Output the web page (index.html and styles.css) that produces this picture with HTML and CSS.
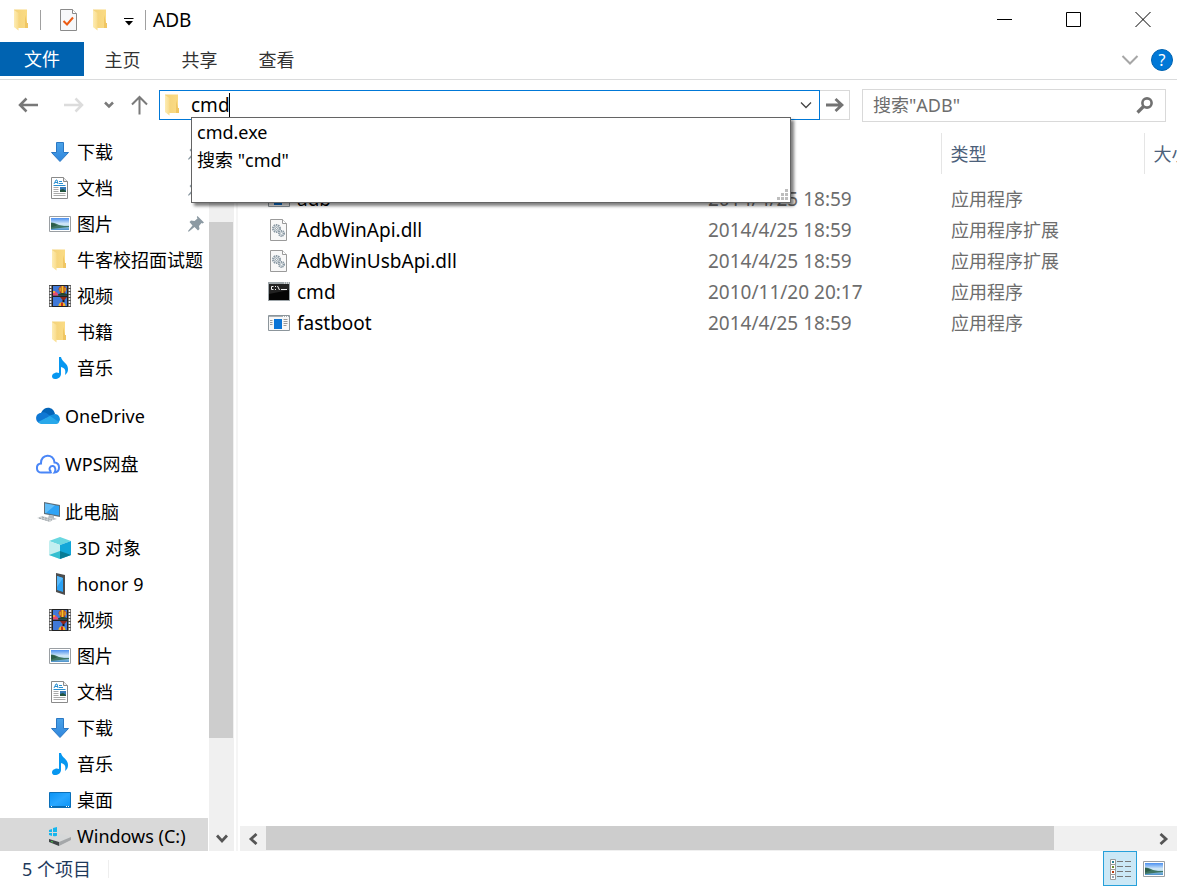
FILE: index.html
```html
<!DOCTYPE html>
<html lang="zh-CN">
<head>
<meta charset="utf-8">
<meta name="viewport" content="width=device-width, initial-scale=1">
<title>ADB</title>
<link rel="stylesheet" href="styles.css">
</head>
<body>
<svg class="sprite" aria-hidden="true">
  <defs>
    <linearGradient id="gFolder" x1="0" x2="1"><stop offset="0" stop-color="#f3d27a"/><stop offset="1" stop-color="#fbdc85"/></linearGradient>
    <linearGradient id="gFlap" x1="0" x2="1"><stop offset="0" stop-color="#fdecb4"/><stop offset="1" stop-color="#f9dc8b"/></linearGradient>
    <linearGradient id="gSky" x1="0" y1="0" x2="0" y2="1"><stop offset="0" stop-color="#4a8ff0"/><stop offset="0.5" stop-color="#d8ecf7"/><stop offset="0.75" stop-color="#8cc0dc"/><stop offset="1" stop-color="#4a90cc"/></linearGradient>
    <linearGradient id="gDesk" x1="0" y1="0" x2="1" y2="1"><stop offset="0" stop-color="#0a93f5"/><stop offset="0.5" stop-color="#2aa7ff"/><stop offset="1" stop-color="#0a93f5"/></linearGradient>
    <linearGradient id="gArrow" x1="0" y1="0" x2="0" y2="1"><stop offset="0" stop-color="#4ba3e8"/><stop offset="1" stop-color="#2f86dd"/></linearGradient>
  </defs>
  <symbol id="folder" viewBox="0 0 22 22">
    <path d="M3 0.500H16V14H17V19H8L3 18Z" fill="url(#gFolder)"/>
    <path d="M16 14h1v5h-3V6z" fill="#f0c663"/>
    <path d="M3 1L7.500 4V21.500L3 18Z" fill="url(#gFlap)"/>
  </symbol>
  <symbol id="download" viewBox="0 0 22 22">
    <path d="M7.500 1.500h7v10h5L11 20.500 2.500 11.500h5z" fill="url(#gArrow)" stroke="#2b78c4"/>
  </symbol>
  <symbol id="document" viewBox="0 0 22 22">
    <path d="M2.500 0.500h12l4 4v17h-16z" fill="#fff" stroke="#8a8a8a"/>
    <path d="M14.500 0.500v4h4" fill="#eee" stroke="#8a8a8a"/>
    <path d="M5 7l2-4h1l1 4M6 5.500h3M10 4.500h3M10 6.500h4M4.500 8.500h12" stroke="#2a8fd0" fill="none"/>
    <path d="M4.500 10.500h5M4.500 12.500h5M4.500 14.500h5M4.500 16.500h12M4.500 18.500h12" stroke="#aaa"/>
    <path d="M11 10h6v5h-6z" fill="#3678b5"/><path d="M11 15v-2l3-1 3 2v1z" fill="#24553e"/>
  </symbol>
  <symbol id="picture" viewBox="0 0 22 22">
    <path d="M0.500 3.500h21v15h-21z" fill="#fff" stroke="#9a9fa3"/>
    <path d="M2 5h18v12H2z" fill="url(#gSky)"/>
    <path d="M2 9.500c3 0 5 1 8 2.500 3 1 7 1 10 1v1c-7 1-12 1-18 2z" fill="#3f7663"/>
    <path d="M2 10c3 0 4 1 6 2.500L2 14.500z" fill="#2d5d49"/>
  </symbol>
  <symbol id="video" viewBox="0 0 22 22">
    <path d="M0 0h22v22H0z" fill="#555"/>
    <path d="M3 0h16v22H3z" fill="#222"/>
    <path d="M4 1h14v9.500H4zM4 12h14v9H4z" fill="#4079d8"/>
    <path d="M1.500 1v21M20.500 1v21" stroke="#f3f3f3" stroke-width="1.600" stroke-dasharray="2 1"/>
    <path d="M4 7c2-2 4 0 6 3.500H4z" fill="#e64b70"/><path d="M4 6h2v2H4z" fill="#f2a43a"/>
    <path d="M9.500 4.500a4 3.500 0 018 0L15 9h-3z" fill="#a8321f"/><path d="M12.500 1h2v7h-2z" fill="#f4c525"/><path d="M10.500 2.500h1.200v4h-1.200zM15.500 2.500h1.200v4h-1.200z" fill="#e8c22b"/>
    <path d="M9 9.500c3-2 6-2 9-.5v1.500H9z" fill="#23452b"/>
    <path d="M11 12h7l-2.500 3h-2z" fill="#8f2519"/><path d="M13.500 15h2v2h-2z" fill="#181818"/>
    <path d="M9.500 21c0-5 7-5 7 0z" fill="#f4b425"/><path d="M12 17.500h2V21h-2z" fill="#c42b20"/>
  </symbol>
  <symbol id="music" viewBox="0 0 22 22">
    <path d="M10 0h2c1 5 7 6 7 12 0 3-1 4-3 6 1-5 0-7-4-8v7c0 3-3 5-6 5-4 0-4-5 0-6 2-1 3 0 4 0z" fill="#0797f0"/>
  </symbol>
  <symbol id="onedrive" viewBox="0 0 24 24">
    <path d="M5 9c3-7 12-7 14 1l-6 5z" fill="#0364b8"/>
    <path d="M5 9c3-2 6 0 9 3L3 19C-2 16 0 9 5 9z" fill="#0f78d4"/>
    <path d="M12 12l7-2c5 0 7 8 2 9l-6-2z" fill="#1490df"/>
    <path d="M2 18l12-6 9 6c-1 2-2 2-4 2H5c-1 0-2-1-3-2z" fill="#28a8ea"/>
  </symbol>
  <symbol id="wps" viewBox="0 0 24 24">
    <path d="M15 20.500H5.500C-.5 20.500-.5 12 5 11.500 4.500 1.500 18 1 18.500 10.500c6 .5 6 9.500 0 10 1.500-2 1-6-1.500-6.500-3-.5-4.500 3-2.500 5" fill="none" stroke="#4a86f7" stroke-width="2" stroke-linecap="round"/>
  </symbol>
  <symbol id="pc" viewBox="0 0 24 24">
    <path d="M8 2l16 3v12L8 14z" fill="#5d6f7a"/><path d="M9 3.500L23 6v9.500L9 13z" fill="#2ea3f5"/><path d="M9 3.500L19 5.200 10 13 9 12.800z" fill="#62bdf8"/>
    <path d="M13 15l5 1v2l3 1-4 1-5-2z" fill="#b4bbbf"/><path d="M6 16l12 3-4 3L1 18z" fill="#d0d4d6"/><path d="M3 18l10 3M6 17l10 3" stroke="#979fa4" stroke-dasharray="2 1"/>
  </symbol>
  <symbol id="cube" viewBox="0 0 22 22">
    <path d="M11 0l11 4-11 4L0 4z" fill="#69d7e0"/><path d="M0 4l11 4v14L0 18z" fill="#c3eff0"/><path d="M22 4L11 8v14l11-4z" fill="#12a7d8"/>
    <path d="M0 18l11-4v8z" fill="#35bfd0"/><path d="M11 14l11 4-11 4z" fill="#087c96"/>
  </symbol>
  <symbol id="phone" viewBox="0 0 22 22">
    <path d="M7 0l9 2v20l-9-3z" fill="#4d4d4d"/><path d="M8 3l6 2v14l-6-2z" fill="#2aa2f5"/><path d="M8 3l6 2-6 9z" fill="#56b9fb"/>
  </symbol>
  <symbol id="desktop" viewBox="0 0 22 22">
    <path d="M0.500 3.500h21v15h-21z" fill="url(#gDesk)" stroke="#0b6fb8"/><path d="M1 17.500h20" stroke="#086bb0"/><path d="M2 17.500h1M17 17.500h1M19 17.500h1" stroke="#fff"/>
  </symbol>
  <symbol id="drive" viewBox="0 0 22 22">
    <path d="M0 5l3-1v3H0zM4 3l4-1v5H4zM0 8h3v3l-3-1zM4 8h4v4l-4-1z" fill="#16b6ee"/>
    <path d="M0 14l12-5 10 3-12 5z" fill="#d6d8d9"/><path d="M0 14l10 3v4L0 17z" fill="#3f4446"/><path d="M10 17l12-5v3l-12 6z" fill="#a4a7a9"/><path d="M2 16.500l2 .5" stroke="#49cf49"/>
  </symbol>
  <symbol id="pin" viewBox="0 0 16 16">
    <path d="M9.500 0L16 6.500l-1.500 1-1-.5-2.500 3 .5 3-1.500 1.500-3.500-3.500L1 15.500H0V15l4.500-5.500L1.500 6 3 4.500l3.500.5L9.500 2.500 8.800 1z" fill="#8c9aa3"/>
  </symbol>
  <symbol id="app" viewBox="0 0 22 22">
    <path d="M0.500 3.500h21v15h-21z" fill="#f7f7f7" stroke="#8c959b"/><path d="M1 4.500h20" stroke="#a8afb3"/><path d="M15 4.500h1M17 4.500h1M19 4.500h1" stroke="#fff"/>
    <path d="M6 7h8v10H6z" fill="#0a74d6"/><path d="M2 8.500h2.500M2 10.500h2.500M2 12.500h2.500M15.500 7.500h4M15.500 9.500h4M15.500 11.500h4M15.500 13.500h3" stroke="#9a9a9a"/>
  </symbol>
  <symbol id="dll" viewBox="0 0 22 22">
    <path d="M2.500 0.500h12l4 4v17h-16z" fill="#f8f8f8" stroke="#9a9a9a"/><path d="M14.500 0.500v4h4" fill="#fff" stroke="#9a9a9a"/>
    <g fill="none"><circle cx="8.500" cy="9.500" r="3.500" stroke="#8998a3" stroke-width="2" stroke-dasharray="1.500 .7"/><circle cx="8.500" cy="9.500" r="2.500" stroke="#aebac2"/><circle cx="8.500" cy="9.500" r="1" stroke="#8998a3"/>
    <circle cx="13.500" cy="14.500" r="2.500" stroke="#8998a3" stroke-width="2" stroke-dasharray="1.200 .6"/><circle cx="13.500" cy="14.500" r="1" stroke="#b9c4ca"/></g>
  </symbol>
  <symbol id="console" viewBox="0 0 22 22">
    <path d="M0 1h22v19H0z" fill="#9da5a9"/><path d="M1 3h20v16H1z" fill="#050505"/><path d="M1 3h20v6L1 13z" fill="#222"/>
    <path d="M5.500 5.500h-2v3h2M7.500 5v1M7.500 8v1M9.500 5l2 4M13 8.500h6" stroke="#eee" fill="none"/><path d="M16 2h1M18 2h1M20 2h1" stroke="#fff"/>
  </symbol>
</svg>

<div class="window">
  <header class="titlebar">
    <svg class="icon" aria-hidden="true"><use href="#folder"/></svg>
    <span class="rule rule-first"></span>
    <button class="quick" aria-label="属性">
      <svg class="icon" viewBox="0 0 22 22"><path d="M3.500 0.500h12l4 4v17h-16z" fill="#f7f8fa" stroke="#8a8a8a"/><path d="M15.500 0.500v4h4" fill="#fff" stroke="#8a8a8a"/><path d="M6.500 12l3.500 3.500 6-7" fill="none" stroke="#ec5b13" stroke-width="2"/></svg>
    </button>
    <button class="quick" aria-label="新建文件夹"><svg class="icon"><use href="#folder"/></svg></button>
    <button class="quick quick-more" aria-label="自定义快速访问工具栏"><svg width="10" height="10" viewBox="0 0 10 10"><path d="M0 1.500h9.500" stroke="#000"/><path d="M1 4h8L5 8.500z"/></svg></button>
    <span class="rule"></span>
    <h1 class="title">ADB</h1>
    <div class="controls">
      <button aria-label="最小化"><svg width="16" height="16"><path d="M0 7.500h15" stroke="#000"/></svg></button>
      <button aria-label="最大化"><svg width="16" height="16"><path d="M0.500 0.500h14v14h-14z" fill="none" stroke="#000"/></svg></button>
      <button aria-label="关闭"><svg width="16" height="16"><path d="M0.500 0l15 15M15.500 0l-15 15" stroke="#000"/></svg></button>
    </div>
  </header>

  <nav class="ribbon" aria-label="功能区">
    <button class="tab tab-file">文件</button>
    <button class="tab">主页</button>
    <button class="tab">共享</button>
    <button class="tab">查看</button>
    <div class="ribbon-end">
      <button aria-label="展开功能区"><svg width="18" height="12"><path d="M1.500 2l7.500 7.500L16.500 2" fill="none" stroke="#a6a6a6" stroke-width="2"/></svg></button>
      <button class="help" aria-label="帮助">?</button>
    </div>
  </nav>

  <div class="navbar">
    <button class="nav-wide" aria-label="后退"><svg width="20" height="16"><path d="M1.500 8H20M8.500 1.500L2 8l6.500 6.500" fill="none" stroke="#787878" stroke-width="2.500"/></svg></button>
    <button class="nav-wide" aria-label="前进"><svg width="20" height="16"><path d="M0 8h18.500M11.500 1.500L18 8l-6.500 6.500" fill="none" stroke="#dcdcdc" stroke-width="2.500"/></svg></button>
    <button class="nav-small" aria-label="最近位置"><svg width="10" height="8"><path d="M1 1.500l4 4 4-4" fill="none" stroke="#7a7a7a" stroke-width="2.500"/></svg></button>
    <button class="nav-up" aria-label="上移"><svg width="18" height="20"><path d="M8.500 19.500V2M1 9.500L8.500 2 16 9.500" fill="none" stroke="#7a7a7a" stroke-width="2"/></svg></button>
    <div class="address">
      <svg class="icon" aria-hidden="true"><use href="#folder"/></svg>
      <input class="path" type="text" value="cmd" aria-label="地址">
      <span class="caret"></span>
      <button class="drop" aria-label="以前的位置"><svg width="12" height="8"><path d="M1 1.500l5 5 5-5" fill="none" stroke="#444" stroke-width="1.300"/></svg></button>
      <ul class="suggest">
        <li>cmd.exe</li>
        <li>搜索 "cmd"</li>
        <li class="grip" aria-hidden="true"><svg width="12" height="12" fill="#bdbdbd"><path d="M8 0h3v3H8zM4 4h3v3H4zM8 4h3v3H8zM0 8h3v3H0zM4 8h3v3H4zM8 8h3v3H8z"/></svg></li>
      </ul>
    </div>
    <button class="go" aria-label="转到"><svg width="18" height="16"><path d="M0 8h16M9.500 2l6.500 6-6.500 6" fill="none" stroke="#737373" stroke-width="2.800"/></svg></button>
    <div class="search">
      <input type="search" placeholder='搜索"ADB"' aria-label="搜索">
      <svg width="18" height="18" aria-hidden="true"><circle cx="11" cy="7" r="4.600" fill="none" stroke="#707070" stroke-width="2.600"/><path d="M7.500 10.500L1.500 16.500" stroke="#707070" stroke-width="3.200"/></svg>
    </div>
  </div>

  <div class="body">
    <aside class="sidebar">
      <ul class="tree">
        <li class="node"><svg class="icon"><use href="#download"/></svg>下载<svg class="pin"><use href="#pin"/></svg></li>
        <li class="node"><svg class="icon"><use href="#document"/></svg>文档<svg class="pin"><use href="#pin"/></svg></li>
        <li class="node"><svg class="icon"><use href="#picture"/></svg>图片<svg class="pin"><use href="#pin"/></svg></li>
        <li class="node"><svg class="icon"><use href="#folder"/></svg>牛客校招面试题</li>
        <li class="node"><svg class="icon"><use href="#video"/></svg>视频</li>
        <li class="node"><svg class="icon"><use href="#folder"/></svg>书籍</li>
        <li class="node"><svg class="icon"><use href="#music"/></svg>音乐</li>
        <li class="node root"><svg class="icon-root"><use href="#onedrive"/></svg>OneDrive</li>
        <li class="node root"><svg class="icon-root"><use href="#wps"/></svg>WPS网盘</li>
        <li class="node root"><svg class="icon-root"><use href="#pc"/></svg>此电脑</li>
        <li class="node"><svg class="icon"><use href="#cube"/></svg>3D 对象</li>
        <li class="node"><svg class="icon"><use href="#phone"/></svg>honor 9</li>
        <li class="node"><svg class="icon"><use href="#video"/></svg>视频</li>
        <li class="node"><svg class="icon"><use href="#picture"/></svg>图片</li>
        <li class="node"><svg class="icon"><use href="#document"/></svg>文档</li>
        <li class="node"><svg class="icon"><use href="#download"/></svg>下载</li>
        <li class="node"><svg class="icon"><use href="#music"/></svg>音乐</li>
        <li class="node"><svg class="icon"><use href="#desktop"/></svg>桌面</li>
        <li class="node selected"><svg class="icon"><use href="#drive"/></svg>Windows (C:)</li>
      </ul>
      <div class="vscroll">
        <span class="vthumb"></span>
        <button aria-label="向下滚动"><svg width="12" height="10"><path d="M1 1.500l5 5.500 5-5.500" fill="none" stroke="#555" stroke-width="2.800"/></svg></button>
      </div>
    </aside>

    <main class="content">
      <div class="list">
        <table class="files">
          <colgroup><col class="c-name"><col class="c-date"><col class="c-type"><col class="c-size"></colgroup>
          <thead><tr><th aria-label="名称"></th><th aria-label="修改日期"></th><th>类型</th><th>大小</th></tr></thead>
          <tbody>
            <tr><td class="name"><svg class="icon"><use href="#app"/></svg>adb</td><td class="latin">2014/4/25 18:59</td><td>应用程序</td><td></td></tr>
            <tr><td class="name"><svg class="icon"><use href="#dll"/></svg>AdbWinApi.dll</td><td class="latin">2014/4/25 18:59</td><td>应用程序扩展</td><td></td></tr>
            <tr><td class="name"><svg class="icon"><use href="#dll"/></svg>AdbWinUsbApi.dll</td><td class="latin">2014/4/25 18:59</td><td>应用程序扩展</td><td></td></tr>
            <tr><td class="name"><svg class="icon"><use href="#console"/></svg>cmd</td><td class="latin">2010/11/20 20:17</td><td>应用程序</td><td></td></tr>
            <tr><td class="name"><svg class="icon"><use href="#app"/></svg>fastboot</td><td class="latin">2014/4/25 18:59</td><td>应用程序</td><td></td></tr>
          </tbody>
        </table>
      </div>
      <div class="hscroll">
        <button aria-label="向左滚动"><svg width="10" height="12"><path d="M8.500 1L3 6l5.500 5" fill="none" stroke="#555" stroke-width="2.800"/></svg></button>
        <div class="htrack"><span class="hthumb"></span></div>
        <button aria-label="向右滚动"><svg width="10" height="12"><path d="M1.500 1L7 6l-5.500 5" fill="none" stroke="#555" stroke-width="2.800"/></svg></button>
      </div>
    </main>
  </div>

  <footer class="status">
    <span class="count">5 个项目</span>
    <div class="views">
      <button class="view active" aria-label="详细信息"><svg width="22" height="22"><g fill="#fff" stroke="#9a9a9a"><path d="M1.500 1.500h5v5h-5zM1.500 6.500h5v5h-5zM1.500 11.500h5v5h-5zM1.500 16.500h5v5h-5z"/></g><path d="M3 3h2v2H3z" fill="#2a7f93"/><path d="M3 8h2v2H3z" fill="#6c8b2c"/><path d="M3 13h2v2H3z" fill="#b83a10"/><path d="M3 18h2v2H3z" fill="#8fa3b5"/><path d="M8 3.500h6M16 3.500h6M8 8.500h6M16 8.500h6M8 13.500h6M16 13.500h6M8 18.500h6M16 18.500h6" stroke="#777"/></svg></button>
      <button class="view" aria-label="大缩略图"><svg class="icon"><use href="#picture"/></svg></button>
    </div>
  </footer>
</div>
</body>
</html>
```

FILE: styles.css
```css
* { box-sizing: border-box; }

body {
  margin: 0;
  background: #fff;
  color: #000;
  font: 18px/24px "Noto Sans", "Noto Sans CJK SC", sans-serif;
}

button, input { font: inherit; color: inherit; }

button {
  display: flex;
  align-items: center;
  justify-content: center;
  padding: 0;
  border: 0;
  background: none;
}

ul { list-style: none; margin: 0; padding: 0; }
svg { flex: none; }

.sprite { position: absolute; width: 0; height: 0; }
.icon { width: 22px; height: 22px; }
.icon-root { width: 24px; height: 24px; }
.latin { font-size: 19px; }

.window {
  display: flex;
  flex-direction: column;
  height: 100vh;
  overflow: hidden;
}

/* Title bar */
.titlebar {
  display: flex;
  align-items: center;
  height: 42px;
  padding: 0 0 3px 11px;
}
.rule { width: 1px; height: 20px; background: #a0a0a0; }
.rule-first { margin: 0 16px 0 7px; }
.quick { width: 32px; height: 32px; }
.quick:first-of-type { width: 22px; }
.quick + .quick { margin-left: 6px; }
.quick-more { width: 24px; padding-top: 5px; margin-right: 4px; }
.quick + .quick-more { margin-left: 0; }
.title { margin: 0 0 0 7px; font-size: 19px; font-weight: 400; }
.controls { display: flex; margin-left: auto; }
.controls button { width: 69px; height: 39px; }

/* Ribbon tabs */
.ribbon {
  display: flex;
  height: 38px;
  border-bottom: 1px solid #dadbdc;
  color: #333;
}
.tab { width: 77px; height: 36px; }
.tab-file { width: 84px; height: 34px; background: #0063b1; color: #fff; }
.ribbon-end {
  display: flex;
  align-items: center;
  gap: 12px;
  height: 36px;
  margin-left: auto;
  padding-right: 4px;
}
.help {
  width: 22px;
  height: 22px;
  border: 1px solid #0063b1;
  border-radius: 50%;
  background: #0078d7;
  color: #fff;
  font-size: 16px;
}

/* Navigation bar */
.navbar {
  display: flex;
  align-items: center;
  height: 50px;
  padding: 0 11px 0 5px;
}
.nav-wide { width: 46px; height: 30px; }
.nav-small { width: 24px; height: 30px; }
.nav-up { width: 38px; height: 30px; }
.address {
  position: relative;
  display: flex;
  align-items: center;
  flex: 1;
  height: 30px;
  padding-left: 2px;
  border: 1px solid #0078d7;
}
.path {
  width: 38px;
  height: 26px;
  margin-left: 7px;
  padding: 0;
  border: 0;
  outline: 0;
  font-size: 19px;
}
.caret { width: 1px; height: 24px; background: #000; }
.drop { width: 26px; height: 28px; margin-left: auto; }
.suggest {
  position: absolute;
  z-index: 2;
  top: 26px;
  left: 31px;
  right: 28px;
  height: 86px;
  padding: 0 5px;
  border: 1px solid #646464;
  background: #fff;
  box-shadow: 3px 3px 3px rgba(0, 0, 0, 0.5);
  line-height: 28px;
}
.grip { position: absolute; right: 1px; bottom: 1px; display: flex; }
.go { width: 30px; height: 30px; border: 1px solid #d9d9d9; border-left: 0; }
.search {
  display: flex;
  align-items: center;
  width: 304px;
  height: 33px;
  margin-left: 12px;
  padding: 0 11px 0 10px;
  border: 1px solid #d9d9d9;
  color: #6d6d6d;
}
.search input {
  flex: 1;
  min-width: 0;
  padding: 0;
  border: 0;
  outline: 0;
  background: none;
}
.search input::placeholder { color: #6d6d6d; }

/* Body */
.body { display: flex; flex: 1; min-height: 0; }
.sidebar {
  display: flex;
  width: 238px;
  border-right: 2px solid #f5f5f5;
}
.tree { flex: 1; min-width: 0; padding-top: 4px; overflow: hidden; }
.node {
  display: flex;
  align-items: center;
  gap: 6px;
  height: 36px;
  padding: 0 4px 0 49px;
  margin-right: 1px;
  white-space: nowrap;
}
.root { gap: 5px; padding-left: 36px; margin-top: 12px; }
.selected { background: #d9d9d9; }
.pin { width: 16px; height: 16px; margin-left: auto; }
.vscroll {
  display: flex;
  flex-direction: column;
  width: 25px;
  margin-right: 2px;
  padding-top: 92px;
  background: #f0f0f0;
}
.vthumb { flex: 0 0 82%; width: 24px; background: #cdcdcd; }
.vscroll button { height: 25px; margin-top: auto; }

/* File list */
.content {
  display: flex;
  flex-direction: column;
  flex: 1;
  min-width: 0;
  padding-left: 2px;
}
.list { flex: 1; min-height: 0; padding-top: 3px; overflow: hidden; }
.files { width: 1100px; table-layout: fixed; border-collapse: collapse; }
.c-name { width: 458px; }
.c-date { width: 243px; }
.c-type { width: 203px; }
.files th {
  height: 41px;
  padding: 1px 9px 0;
  border-right: 1px solid #e5e5e5;
  color: #4c607a;
  font-weight: 400;
  text-align: left;
}
.files tbody::before { content: ""; display: block; height: 9px; }
.files td { height: 31px; padding: 0 10px; color: #6d6d6d; }
.files .name {
  display: flex;
  align-items: center;
  gap: 7px;
  padding-left: 28px;
  color: #000;
  font-size: 19px;
}
.hscroll { display: flex; height: 25px; background: #f0f0f0; }
.hscroll button { width: 26px; }
.htrack { flex: 1; display: flex; }
.hthumb { width: 89%; height: 24px; background: #cdcdcd; }

/* Status bar */
.status {
  display: flex;
  align-items: center;
  height: 35px;
  padding: 0 6px 0 22px;
  color: #1e395b;
}
.count { padding-right: 17px; border-right: 1px solid #eee; line-height: 18px; }
.views { display: flex; margin-left: auto; }
.view { width: 34px; height: 35px; }
.active { border: 1px solid #26a0da; background: #cbe8f6; }
```
